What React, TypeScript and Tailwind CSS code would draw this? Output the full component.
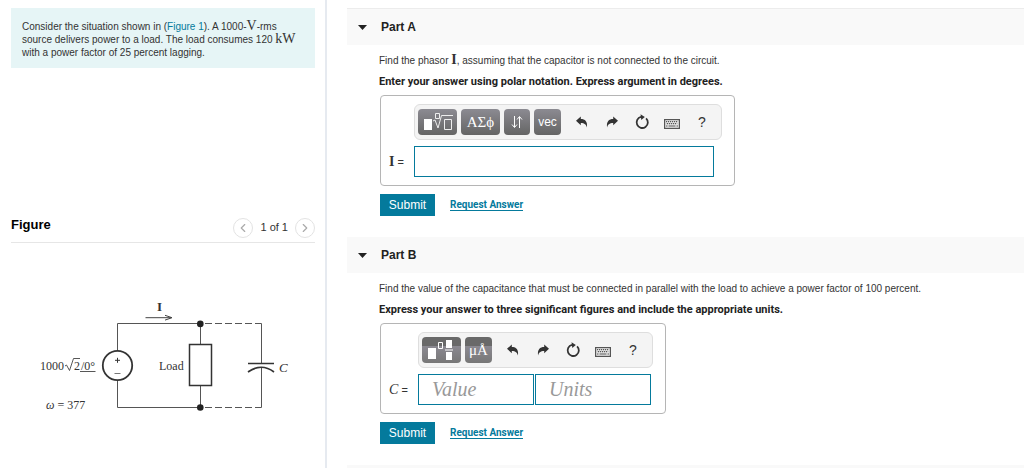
import type { ReactNode } from 'react';
import { ChevronLeft, ChevronRight } from 'lucide-react';

const glossy = 'flex h-[26px] items-center justify-center rounded-[4px] text-white';
const shadeDown = 'bg-linear-to-b from-[#8c8b92] to-[#656565]';
const shadeSplit = 'bg-linear-to-b from-[#696969] from-35% via-[#8b8991] via-35% to-[#777777]';

function UndoIcon() {
  return (
    <svg className="h-3 w-3" viewBox="0 0 12 12" fill="#333">
      <path d="M0 4.8 4.8.5V3C9 3 11.8 5.4 10.9 11.5 10.2 8.4 8.6 6.9 4.8 6.9V9.2Z" />
    </svg>
  );
}

function RedoIcon() {
  return (
    <svg className="h-3 w-3" viewBox="0 0 12 12" fill="#333">
      <path d="M12 4.8 7.2.5V3C3 3 .2 5.4 1.1 11.5 1.8 8.4 3.4 6.9 7.2 6.9V9.2Z" />
    </svg>
  );
}

function ResetIcon() {
  return (
    <svg className="h-4 w-4" viewBox="0 0 16 16" fill="none">
      <path d="M12.1 4.3A5.6 5.6 0 1 1 7 2.9" stroke="#333" strokeWidth="1.8" />
      <path d="M6.5.2 10.8 3 7.3 6Z" fill="#333" />
    </svg>
  );
}

function KeyboardIcon() {
  return (
    <svg className="mt-[3px] h-[10px] w-4" viewBox="0 0 16 10" fill="none" stroke="#555">
      <rect x=".6" y=".6" width="14.8" height="8.8" fill="#e8e8e8" strokeWidth="1.2" />
      <path d="M2 2.7h12M2.8 4.7h10.4" strokeDasharray="1.2 .8" strokeWidth="1.3" />
      <path d="M2 7h1.5M4.5 7h7M12.5 7H14" />
    </svg>
  );
}

function Toolbar({ children }: { children: ReactNode }) {
  const tools = [
    { label: 'Undo', icon: <UndoIcon /> },
    { label: 'Redo', icon: <RedoIcon /> },
    { label: 'Reset', icon: <ResetIcon /> },
    { label: 'Keyboard shortcuts', icon: <KeyboardIcon /> },
    { label: 'Help', icon: <span className="text-[14px]">?</span> },
  ];
  return (
    <div className="flex h-9 items-center gap-1 rounded-md border border-[#dedede] bg-[#f4f4f4] pr-1 pl-[3px]">
      {children}
      <div className="flex pl-[2px]">
        {tools.map((t) => (
          <button key={t.label} type="button" aria-label={t.label} className="flex h-[26px] w-[30px] items-center justify-center text-[#333]">
            {t.icon}
          </button>
        ))}
      </div>
    </div>
  );
}

function Part({ title, children }: { title: string; children: ReactNode }) {
  return (
    <section className="pb-[21px]">
      <h2 className="bg-[#f9f9f9]">
        <button type="button" aria-expanded="true" className="flex h-9 w-full items-center gap-[14px] pl-[11px] text-[12px] font-bold text-[#222]">
          <svg className="h-[5px] w-[9px]" viewBox="0 0 9 5" fill="#222">
            <path d="M0 0h9L4.5 5Z" />
          </svg>
          {title}
        </button>
      </h2>
      {children}
    </section>
  );
}

function Actions() {
  return (
    <div className="mt-2 flex items-center gap-[15px]">
      <button type="submit" className="h-[22px] w-[55px] bg-[#047a9c] text-[12px] text-white">Submit</button>
      <a href="#request" className="border-b border-[#047a9c] font-[Roboto,sans-serif] text-[10px] leading-[10px] font-bold text-[#047a9c]">Request Answer</a>
    </div>
  );
}

function Circuit() {
  return (
    <svg className="mt-[47px] ml-[9px] h-[130px] w-[300px]" viewBox="0 0 300 130" fill="none" stroke="#333" fontFamily="Liberation Serif, serif" role="img" aria-label="Source, load and capacitor circuit">
      <path d="M97.5 60V33.5H180.5V54M97.5 90.5V117.5H180.5V96M241.5 33.5V73M241.5 78V117.5" stroke="#555" />
      <path d="M185 33.5H241.5M185 117.5H241.5" stroke="#555" strokeDasharray="7 3" />
      <path d="M125.5 27.7H151M145 25.3 152 27.7 145 30.1" stroke="#444" />
      <circle cx="97.5" cy="75.5" r="14.7" strokeWidth="1.8" />
      <path d="M95 70.3h5M97.5 67.8v5" />
      <path d="M94.5 83.5h6" stroke="#777" />
      <rect x="169.5" y="54.5" width="22" height="41" strokeWidth="1.5" />
      <path d="M228 73.5H254M228 82Q241.5 72.5 254 82" strokeWidth="1.7" />
      <circle cx="180.3" cy="33.9" r="3.3" fill="#222" stroke="none" />
      <circle cx="180.3" cy="117.5" r="3.3" fill="#222" stroke="none" />
      <path d="M45 76 46.5 75 49.5 80.5 53.5 68.5H60M60 81.5H75.5" stroke="#444" strokeWidth=".9" />
      <g fill="#333" stroke="none" fontSize="12">
        <text x="137" y="21" fontSize="13" fontWeight="bold">I</text>
        <text x="20" y="80">1000</text>
        <text x="54" y="80">2</text>
        <text x="61" y="80">/0°</text>
        <text x="139" y="80">Load</text>
        <text x="259" y="82" fontSize="13" fontStyle="italic">C</text>
        <text x="26" y="119"><tspan fontStyle="italic">ω</tspan> = 377</text>
      </g>
    </svg>
  );
}

const field = 'h-[31px] border border-[#047a9c] bg-white text-[#333] outline-none';
const answerBox = 'w-fit rounded-[4px] border border-[#b5b5b5] pt-2 pr-3 pb-2';

export default function App() {
  return (
    <div className="flex min-h-screen bg-white font-['Liberation_Sans',sans-serif] text-[11px] text-[#333]">
      <aside className="w-[327px] shrink-0 border-r-2 border-[#e6eaf0] pt-2 pr-[10px] pl-[11px]">
        <p className="bg-[#e6f5f6] pt-3 pr-2 pb-[9px] pl-[11px] text-[10px] leading-[13px]">
          Consider the situation shown in (<a href="#figure" className="text-[#047a9c]">Figure 1</a>). A 1000-<span className="font-['Liberation_Serif',serif] text-[14px] leading-[0]">V</span>-rms
          <br />
          source delivers power to a load. The load consumes 120 <span className="font-['Liberation_Serif',serif] text-[14px] leading-[0]">kW</span>
          <br />
          with a power factor of 25 percent lagging.
        </p>
        <div id="figure" className="mt-[145px] flex h-[30px] items-center justify-between border-b border-[#e6e6e6]">
          <h2 className="pb-[6px] text-[13px] font-bold text-black">Figure</h2>
          <div className="flex items-center gap-[7px]">
            <button type="button" aria-label="Previous figure" className="flex size-5 items-center justify-center rounded-full border border-[#e3e3e3] text-[#aaa]">
              <ChevronLeft size={14} strokeWidth={2} />
            </button>
            <span>1 of 1</span>
            <button type="button" aria-label="Next figure" className="flex size-5 items-center justify-center rounded-full border border-[#e3e3e3] text-[#aaa]">
              <ChevronRight size={14} strokeWidth={2} />
            </button>
          </div>
        </div>
        <Circuit />
      </aside>

      <main className="flex flex-1 flex-col pt-2 pl-5">
        <div className="border-t border-[#ececec]">
          <Part title="Part A">
            <div className="pt-[6px] pl-8 leading-5">
              <p className="h-5 text-[10px]">Find the phasor <b className="font-['Liberation_Serif',serif] text-[14px] leading-[0]">I</b>, assuming that the capacitor is not connected to the circuit.</p>
              <p className="mt-px font-[Roboto,sans-serif] font-bold text-[#222]">Enter your answer using polar notation. Express argument in degrees.</p>
            </div>
            <form className="mt-[3px] pl-[33px]" onSubmit={(e) => e.preventDefault()}>
              <div className={`${answerBox} grid grid-cols-[33px_auto] gap-y-[6px]`}>
                <div className="col-start-2">
                  <Toolbar>
                    <button type="button" aria-label="Templates" className={`${glossy} ${shadeDown} w-[39px]`}>
                      <svg className="h-5 w-8" viewBox="0 0 32 20" fill="none" stroke="#eee">
                        <path d="M2 7h8v11H2z" fill="#fff" stroke="none" />
                        <path d="M13.5 1.5h4v5h-4zM11 9l2-1 3 8L19.5 3.500H31M22.500 7.500h7v10h-7z" />
                      </svg>
                    </button>
                    <button type="button" className={`${glossy} ${shadeDown} w-[39px] font-['Liberation_Serif',serif] text-[15px]`}>ΑΣϕ</button>
                    <button type="button" aria-label="Arrows" className={`${glossy} ${shadeDown} w-[26px]`}>
                      <svg className="h-[14px] w-3" viewBox="0 0 12 14" fill="none" stroke="#fff">
                        <path d="M3.5 1v11M1 9.500l2.500 3 2.500-3M8.500 13V2M6 4.500l2.500-3 2.500 3" />
                      </svg>
                    </button>
                    <button type="button" className={`${glossy} ${shadeDown} w-[27px] text-[12px]`}>vec</button>
                  </Toolbar>
                </div>
                <label htmlFor="phasor" className="self-center pl-2 text-[11px]">
                  <b className="font-['Liberation_Serif',serif] text-[14px]">I</b> =
                </label>
                <input id="phasor" className={`${field} w-[300px] px-2 text-[14px]`} />
              </div>
              <Actions />
            </form>
          </Part>
        </div>

        <Part title="Part B">
          <div className="pt-[6px] pl-8 leading-5">
            <p className="h-5 text-[10px]">Find the value of the capacitance that must be connected in parallel with the load to achieve a power factor of 100 percent.</p>
            <p className="mt-px font-[Roboto,sans-serif] font-bold text-[#222]">Express your answer to three significant figures and include the appropriate units.</p>
          </div>
          <form className="mt-[3px] pl-[33px]" onSubmit={(e) => e.preventDefault()}>
            <div className={`${answerBox} grid grid-cols-[37px_auto] gap-y-[6px]`}>
              <div className="col-start-2">
                <Toolbar>
                  <button type="button" aria-label="Templates" className={`${glossy} ${shadeSplit} w-[39px]`}>
                    <svg className="h-[22px] w-8" viewBox="0 0 32 22" fill="#fff">
                      <path d="M2 9h8v11H2zM20 1h6v8h-6zM20 13h6v8h-6zM19 10.5h8v1h-8z" />
                      <path d="M12.5 3.5h4v6h-4z" fill="none" stroke="#fff" />
                    </svg>
                  </button>
                  <button type="button" className={`${glossy} ${shadeSplit} w-[27px] font-['Liberation_Serif',serif] text-[15px]`}>μÅ</button>
                </Toolbar>
              </div>
              <label htmlFor="value" className="self-center pl-2 text-[11px]">
                <i className="font-['Liberation_Serif',serif] text-[14px]">C</i> =
              </label>
              <div className="flex gap-px">
                <input id="value" placeholder="Value" className={`${field} w-[116px] px-[13px] font-['Liberation_Serif',serif] text-[20px] italic placeholder:text-[#999]`} />
                <input aria-label="Units" placeholder="Units" className={`${field} w-[116px] px-[13px] font-['Liberation_Serif',serif] text-[20px] italic placeholder:text-[#999]`} />
              </div>
            </div>
            <Actions />
          </form>
        </Part>
        <div className="flex-1 bg-[#f9f9f9]" />
      </main>
    </div>
  );
}
